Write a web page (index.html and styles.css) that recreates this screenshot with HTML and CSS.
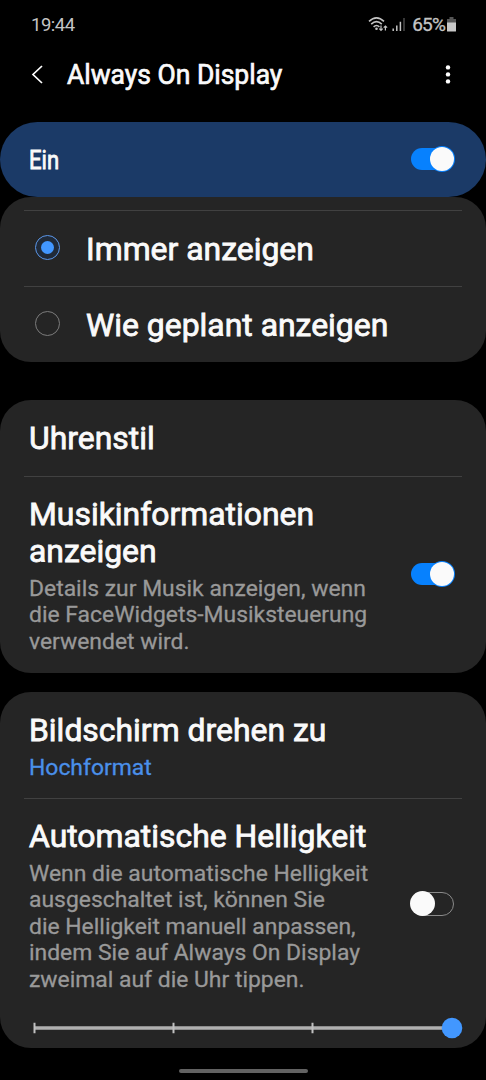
FILE: index.html
```html
<!DOCTYPE html>
<html lang="de">
<head>
<meta charset="utf-8">
<title>Always On Display</title>
<link rel="stylesheet" href="styles.css">
</head>
<body>
<div class="statusbar">
  <span class="clock">19:44</span>
  <svg class="status-icons" width="38" height="18" viewBox="0 0 38 18" fill="none">
    <g stroke="#c4c4c4" stroke-width="1.600">
      <path d="M1 5.400Q8.500-1.800 16 5.400M3.200 8.200Q8.500 3.200 13.800 8.200M5.600 10.800Q8.500 8.200 11.400 10.800"/>
    </g>
    <circle cx="8.500" cy="12.800" r="1.300" fill="#c4c4c4"/>
    <path d="M13 9.500V14.300M11.300 12.600L13 14.300L14.700 12.600M17.400 14.500V10M15.700 11.700L17.400 10L19.100 11.700" stroke="#c4c4c4" stroke-width="1.200"/>
    <path d="M25.200 12.500V15M28.800 9.500V15M32.400 5.800V15" stroke="#c4c4c4" stroke-width="1.500"/>
    <path d="M36 2V15" stroke="#4a4a4a" stroke-width="1.500"/>
  </svg>
  <span class="percent">65%</span>
  <svg class="battery" width="9" height="15" viewBox="0 0 9 15">
    <path d="M2.500 0h4v2H9v4H0V2h2.500z" fill="#555"/>
    <path d="M0 5.500h9v8.500q0 .5-.5.5h-8q-.5 0-.5-.5z" fill="#c8c8c8"/>
  </svg>
</div>
<header class="header">
  <svg class="back" width="12" height="20" viewBox="0 0 12 20" fill="none" stroke="#fff" stroke-width="1.700"><path d="M11 1L2 9.500L11 18"/></svg>
  <h1 class="heading">Always On Display</h1>
  <svg class="more" width="6" height="20" viewBox="0 0 6 20" fill="#fff"><circle cx="3" cy="2.400" r="2.200"/><circle cx="3" cy="9.400" r="2.200"/><circle cx="3" cy="16.400" r="2.200"/></svg>
</header>
<section class="master">
  <span class="master-label">Ein</span>
  <span class="switch on"><span class="thumb"></span></span>
</section>
<section class="card modes">
  <div class="mode"><span class="radio selected"></span><span class="title">Immer anzeigen</span></div>
  <div class="mode"><span class="radio"></span><span class="title">Wie geplant anzeigen</span></div>
</section>
<section class="card clock-card">
  <div class="row"><div class="title">Uhrenstil</div></div>
  <div class="row split music">
    <div>
      <div class="title">Musikinformationen<br>anzeigen</div>
      <div class="sub">Details zur Musik anzeigen, wenn<br>die FaceWidgets-Musiksteuerung<br>verwendet wird.</div>
    </div>
    <span class="switch on"><span class="thumb"></span></span>
  </div>
</section>
<section class="card screen-card">
  <div class="row rotate"><div class="title">Bildschirm drehen zu</div><div class="sub link">Hochformat</div></div>
  <div class="row split bright">
    <div>
      <div class="title">Automatische Helligkeit</div>
      <div class="sub">Wenn die automatische Helligkeit<br>ausgeschaltet ist, können Sie<br>die Helligkeit manuell anpassen,<br>indem Sie auf Always On Display<br>zweimal auf die Uhr tippen.</div>
    </div>
    <span class="switch off"><span class="thumb"></span></span>
  </div>
  <svg class="slider" width="430" height="22" viewBox="0 0 430 22">
    <path d="M1 11H418" stroke="#b0b0b0" stroke-width="3.600"/>
    <path d="M1.500 5.700V16.300M140.500 5.700V16.300M279.500 5.700V16.300" stroke="#c0c0c0" stroke-width="2"/>
    <circle cx="419" cy="11" r="10.300" fill="#4297ff"/>
  </svg>
</section>
<div class="homebar"></div>
</body>
</html>
```
FILE: styles.css
```css
* { box-sizing: border-box; }
body {
  margin: 0;
  width: 486px;
  height: 1080px;
  overflow: hidden;
  background: #000;
  color: #fafafa;
  font-family: Roboto, sans-serif;
  display: flex;
  flex-direction: column;
}
.statusbar {
  height: 49px;
  padding: 0 30px 0 31px;
  display: flex;
  align-items: center;
  color: #c4c4c4;
  font-size: 18.500px;
}
.clock { flex: 1; letter-spacing: -0.5px; }
.status-icons { margin-right: 6px; }
.percent { font-size: 19px; letter-spacing: -0.8px; -webkit-text-stroke: 0.3px currentColor; }
.battery { margin-left: 2px; }
.header {
  height: 73px;
  padding: 0 35px 22px 31px;
  display: flex;
  align-items: center;
}
.heading {
  flex: 1;
  margin: 1px 0 0 24px;
  font-size: 27px;
  font-weight: 400;
  line-height: 32px;
  transform: scaleX(0.98);
  transform-origin: left;
  -webkit-text-stroke: 0.7px currentColor;
}
.master {
  height: 75px;
  padding: 0 32px 0 29px;
  border-radius: 38px;
  background: #1b3a67;
  display: flex;
  align-items: center;
  justify-content: space-between;
}
.master-label {
  font-size: 26px;
  transform: scaleX(0.85);
  transform-origin: left;
  -webkit-text-stroke: 0.8px currentColor;
}
.switch {
  flex: none;
  width: 43px;
  height: 22px;
  margin-top: -1px;
  border-radius: 12px;
  display: flex;
  align-items: center;
}
.thumb {
  flex: none;
  width: 24px;
  height: 24px;
  border-radius: 50%;
  background: #fafafa;
}
.on { background: #0781fe; justify-content: flex-end; }
.on .thumb { box-shadow: 0 0 0 1px #0781fe; }
.music .on { margin-top: -2px; }
.off { height: 24px; margin-top: -4px; border: 1px solid #8a8a8a; }
.off .thumb { width: 25px; height: 25px; margin-left: -2px; }
.card {
  border-radius: 31px;
  background: #252525;
}
.modes { height: 165px; padding: 13px 24px 0; }
.mode {
  height: 76px;
  padding-left: 11px;
  border-top: 1px solid #414141;
  display: flex;
  align-items: center;
  gap: 26px;
}
.radio {
  width: 25px;
  height: 25px;
  margin-top: -2px;
  border: 1.500px solid #7c7c7c;
  border-radius: 50%;
  display: grid;
  place-items: center;
}
.selected { border-color: #5b96e8; background: #202a38; }
.selected::after {
  content: "";
  width: 13px;
  height: 13px;
  border-radius: 50%;
  background: #4297ff;
}
.title {
  font-size: 31.900px;
  line-height: 37.500px;
  -webkit-text-stroke: 0.8px currentColor;
}
.mode .title { padding-top: 2px; }
.sub {
  margin-top: 5px;
  font-size: 22.900px;
  line-height: 26.500px;
  color: #999;
  -webkit-text-stroke: 0.3px currentColor;
}
.link { color: #4a90ea; }
.clock-card { height: 273px; margin-top: 38px; padding: 0 24px; }
.row { padding: 20px 8px 18px 5px; }
.row + .row { border-top: 1px solid #414141; padding-top: 19px; }
.split { display: flex; justify-content: space-between; align-items: center; }
.screen-card { height: 356px; margin-top: 19px; padding: 0 24px; }
.row.rotate { padding-bottom: 17px; }
.slider { display: block; margin: 6px 0 0 9px; }
.homebar {
  width: 129px;
  height: 4px;
  margin: 21px auto 0;
  border-radius: 2px;
  background: #626262;
}
```
